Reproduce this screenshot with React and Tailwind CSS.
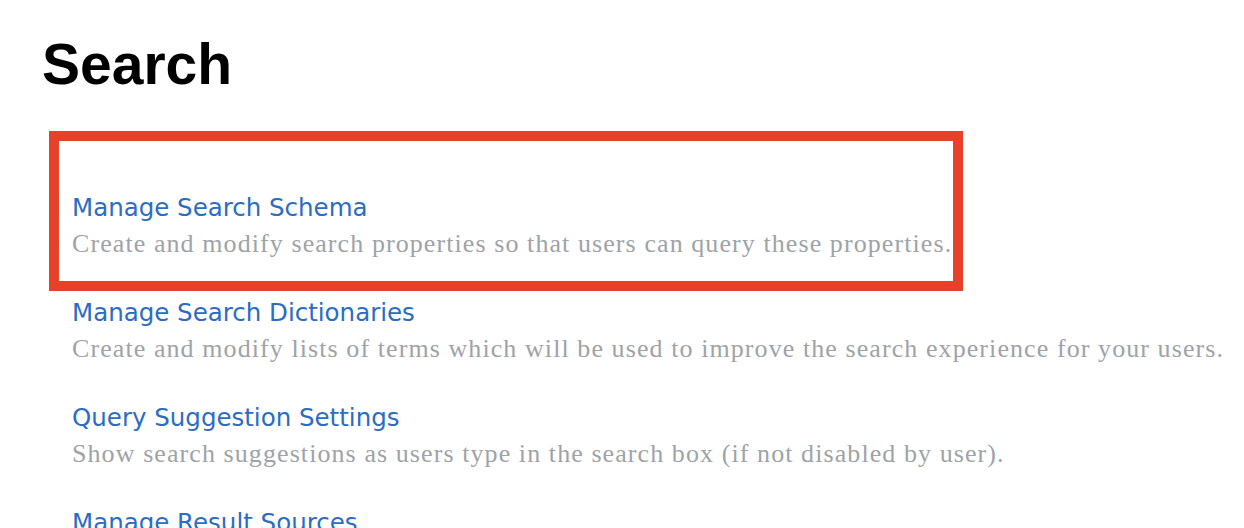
import React from "react";

const items = [
  {
    title: "Manage Search Schema",
    desc: "Create and modify search properties so that users can query these properties.",
    highlight: true,
  },
  {
    title: "Manage Search Dictionaries",
    desc: "Create and modify lists of terms which will be used to improve the search experience for your users.",
  },
  {
    title: "Query Suggestion Settings",
    desc: "Show search suggestions as users type in the search box (if not disabled by user).",
  },
  {
    title: "Manage Result Sources",
    desc: "Define the scope of search results and federate queries to external sources.",
  },
];

const Item = ({ item }) => (
  <div className="h-[105px]">
    <a
      href="#"
      className="block text-[24.5px] leading-[30px] text-[#2b6cc4] font-['DejaVu_Sans',sans-serif]"
    >
      {item.title}
    </a>
    <p className="mt-[7px] text-[26px] leading-[28px] text-[#9ea3a8] font-['Liberation_Serif',serif] tracking-[1.08px] whitespace-nowrap">
      {item.desc}
    </p>
  </div>
);

export default function App() {
  return (
    <div className="h-[528px] overflow-hidden bg-white">
      <h1 className="pl-[42px] pt-[30px] text-[57px] leading-[68px] font-bold text-black font-['Liberation_Sans',Arial,sans-serif]">
        Search
      </h1>
      <div className="mt-[95px] pl-[72px]">
        {items.map((item) =>
          item.highlight ? (
            <div key={item.title} className="relative">
              {/* annotation frame around the first entry */}
              <div className="pointer-events-none absolute left-[-23px] top-[-62px] w-[914px] h-[160px] border-[10px] border-[#e8412a]" />
              <Item item={item} />
            </div>
          ) : (
            <Item key={item.title} item={item} />
          )
        )}
      </div>
    </div>
  );
}
